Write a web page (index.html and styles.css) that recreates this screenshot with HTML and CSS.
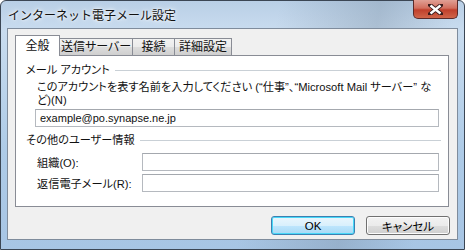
FILE: index.html
```html
<!DOCTYPE html>
<html lang="ja">
<head>
  <meta charset="UTF-8">
  <title>インターネット電子メール設定</title>
  <link rel="stylesheet" href="styles.css">
</head>
<body>
  <div class="window">
    <div class="titlebar">
      <span class="title">インターネット電子メール設定</span>
      <div class="close">
        <svg width="15" height="11" viewBox="0 0 15 11">
          <path d="M2 1 L13 10 M13 1 L2 10" stroke="#3a1c1c" stroke-width="4.2" stroke-linecap="square"/>
          <path d="M2.5 1.5 L12.5 9.5 M12.5 1.5 L2.5 9.5" stroke="#fff" stroke-width="2.4"/>
        </svg>
      </div>
    </div>

    <div class="client">
      <div class="tabs">
        <div class="tab active">全般</div>
        <div class="tab tab-send">送信サーバー</div>
        <div class="tab tab-conn">接続</div>
        <div class="tab tab-adv">詳細設定</div>
      </div>

      <div class="panel">
        <div class="group-head">
          <span>メール アカウント</span>
          <div class="group-line"></div>
        </div>
        <p class="desc">このアカウントを表す名前を入力してください (“仕事”、“Microsoft Mail サーバー” な<br>ど)(N)</p>
        <div class="textbox wide">example@po.synapse.ne.jp</div>

        <div class="group-head second">
          <span>その他のユーザー情報</span>
          <div class="group-line"></div>
        </div>
        <div class="field">
          <label>組織(O):</label>
          <div class="textbox"></div>
        </div>
        <div class="field">
          <label>返信電子メール(R):</label>
          <div class="textbox"></div>
        </div>
      </div>

      <div class="buttons">
        <button class="default">OK</button>
        <button>キャンセル</button>
      </div>
    </div>
  </div>
</body>
</html>
```

FILE: styles.css
```css
body {
  margin: 0;
  width: 465px;
  height: 250px;
  overflow: hidden;
  font-family: "Liberation Sans", "Noto Sans CJK JP", sans-serif;
  font-size: 11px;
  font-feature-settings: "palt";
  color: #111;
}
.window {
  box-sizing: border-box;
  height: 250px;
  display: flex;
  flex-direction: column;
  padding: 0 6px 9px 6px;
  border: 1px solid #3b4654;
  border-radius: 6px 6px 0 0;
  background:
    linear-gradient(100deg, rgba(255,255,255,0) 55%, rgba(120,140,160,0.35) 75%, rgba(255,255,255,0) 90%),
    linear-gradient(to bottom, #b9cfe6 0px, #c9dcef 30px, #aecbe7 60%, #a7c5e4 100%);
}
.titlebar {
  height: 27px;
  display: flex;
  align-items: flex-start;
}
.title {
  padding: 7px 0 0 1px;
  line-height: 14px;
  font-family: "Noto Sans CJK JP", sans-serif;
  font-size: 12px;
  font-feature-settings: normal;
  text-shadow: 0 0 6px #fff, 0 0 3px #fff;
}
.close {
  margin-left: auto;
  margin-top: -1px;
  width: 45px;
  height: 19px;
  box-sizing: border-box;
  border: 1px solid #5a2a2a;
  border-top: none;
  border-radius: 0 0 5px 5px;
  background: linear-gradient(to bottom, #e0a095 0%, #d26e5e 45%, #c0402c 55%, #d0654a 100%);
  display: flex;
  align-items: center;
  justify-content: center;
}
.client {
  flex: 1;
  background: #f0f0f0;
  border: 1px solid #7f8c9c;
  padding: 6px 8px 0 7px;
  display: flex;
  flex-direction: column;
}
.tabs {
  display: flex;
  align-items: flex-end;
  height: 21px;
  margin-bottom: -1px;
  position: relative;
  z-index: 1;
}
.tab {
  box-sizing: border-box;
  height: 18px;
  border: 1px solid #898c95;
  border-left: none;
  text-align: center;
  line-height: 16px;
  font-size: 12px;
  background: linear-gradient(to bottom, #f2f2f2 0%, #ebebeb 50%, #dddddd 51%, #cfcfcf 100%);
}
.tab.active {
  height: 21px;
  width: 45px;
  border-left: 1px solid #898c95;
  border-bottom: none;
  background: #fff;
  line-height: 20px;
}
.tab-send { width: 73px; }
.tab-conn { width: 42px; }
.tab-adv { width: 57px; }
.panel {
  box-sizing: border-box;
  height: 152px;
  width: 434px;
  background: #fff;
  border: 1px solid #898c95;
  padding: 7px 7px 0 10px;
  font-size: 11.2px;
}
.group-head {
  display: flex;
  align-items: center;
  height: 14px;
  line-height: 14px;
}
.group-head.second {
  margin-top: 6px;
}
.group-line {
  flex: 1;
  height: 1px;
  margin-left: 5px;
  margin-top: 1px;
  background: #c9d0d6;
}
.desc {
  margin: 4px 0 0 11px;
  line-height: 13px;
  white-space: nowrap;
}
.textbox {
  box-sizing: border-box;
  height: 18px;
  width: 297px;
  border: 1px solid #b5b9bf;
  border-top-color: #a4a8ae;
  background: #fff;
  padding: 0 4px;
  line-height: 16px;
  font-size: 11px;
}
.textbox.wide {
  width: 404px;
  margin: 2px 0 0 9px;
}
.field {
  display: flex;
  align-items: center;
  margin-top: 3px;
  padding-left: 11px;
}
.group-head.second + .field {
  margin-top: 6px;
}
.field label {
  width: 105px;
}
.buttons {
  display: flex;
  justify-content: flex-end;
  gap: 11px;
  margin-top: 9px;
  margin-right: -1px;
}
button {
  box-sizing: border-box;
  width: 84px;
  height: 19px;
  padding: 0;
  font-family: "Liberation Sans", "Noto Sans CJK JP", sans-serif;
  font-size: 11.5px;
  font-feature-settings: "palt";
  color: #000;
  border: 1px solid #707070;
  border-radius: 3px;
  background: linear-gradient(to bottom, #f2f2f2 0%, #ebebeb 50%, #dddddd 51%, #cfcfcf 100%);
  box-shadow: inset 0 0 0 1px #fcfcfc;
}
button.default {
  border-color: #3c7fb1;
  background: linear-gradient(to bottom, #eaf6fd 0%, #d9f0fc 50%, #bee6fd 51%, #a7d9f5 100%);
  box-shadow: inset 0 0 0 1px #48d8f8;
}
```
